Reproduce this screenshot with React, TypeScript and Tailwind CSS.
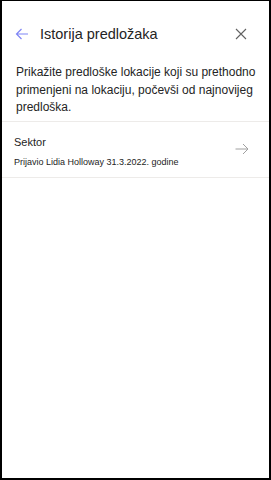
export default function App() {
  return (
    <div
      className="w-[271px] h-[480px] bg-white border-l-2 border-r-2 border-b-2 border-t border-black overflow-hidden"
      style={{ fontFamily: '"Segoe UI", "Liberation Sans", Arial, sans-serif' }}
    >
      {/* Header */}
      <div className="flex items-center h-[34px] mt-[16px] pl-[13px] pr-[22px]">
        <svg width="14" height="14" viewBox="0 0 14 14" fill="none" stroke="#7f85f5" strokeWidth="1.2">
          <path d="M13 7H1.5M6.5 2L1.5 7l5 5" />
        </svg>
        <span className="ml-[11px] text-[14.5px] text-[#242424] leading-none">Istorija predložaka</span>
        <svg className="ml-auto" width="12" height="12" viewBox="0 0 12 12" stroke="#616161" strokeWidth="1.1">
          <path d="M1 1l10 10M11 1L1 11" />
        </svg>
      </div>

      {/* Description */}
      <p className="pl-[14px] pr-[12px] mt-[13px] text-[12px] leading-[17.5px] text-[#242424]">
        Prikažite predloške lokacije koji su prethodno primenjeni na lokaciju, počevši od najnovijeg predloška.
      </p>

      {/* List */}
      <div className="mt-[4px] border-t border-b border-[#edebe9]">
        <div className="flex items-center pl-[12px] pr-[20px] h-[55px]">
          <div className="flex flex-col pt-[6px]">
            <span className="text-[11px] text-[#242424] leading-none">Sektor</span>
            <span className="mt-[10px] text-[9px] text-[#242424] leading-none">Prijavio Lidia Holloway 31.3.2022. godine</span>
          </div>
          <svg className="ml-auto" width="14" height="12" viewBox="0 0 14 12" fill="none" stroke="#a0a0a0" strokeWidth="1">
            <path d="M0.5 6H13M8 1l5 5-5 5" />
          </svg>
        </div>
      </div>
    </div>
  );
}
